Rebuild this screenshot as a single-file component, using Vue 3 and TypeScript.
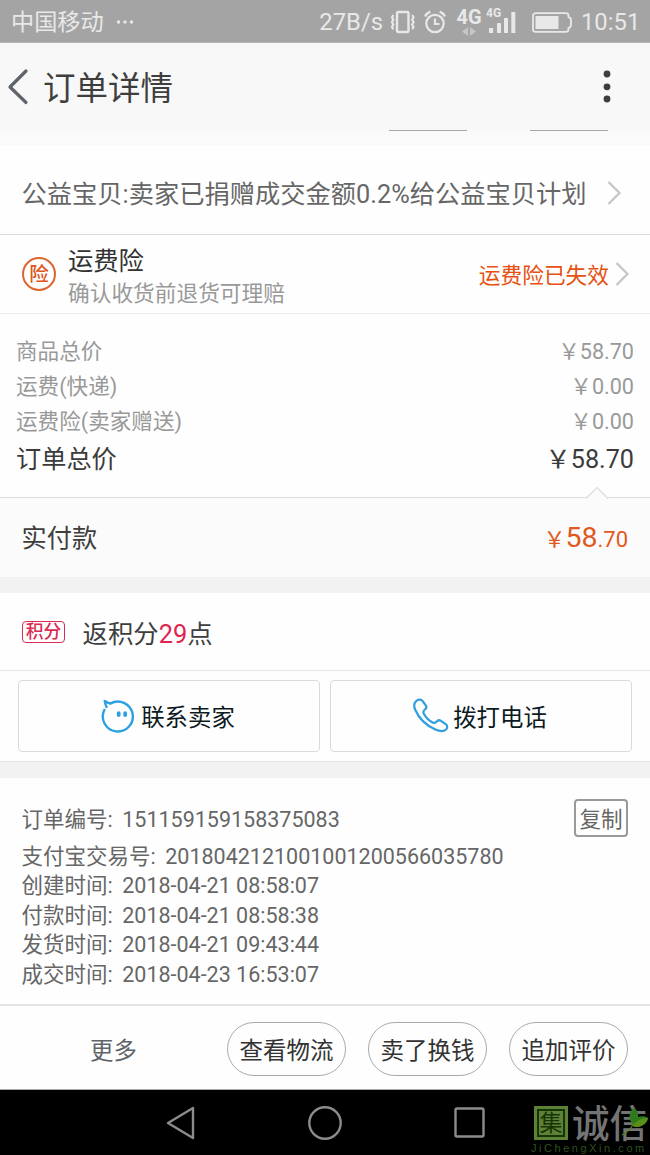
<script setup lang="ts">
interface Row { label: string; value: string }

const costs: Row[] = [
  { label: '商品总价', value: '￥58.70' },
  { label: '运费(快递)', value: '￥0.00' },
  { label: '运费险(卖家赠送)', value: '￥0.00' },
]
const times: Row[] = [
  { label: '创建时间:', value: '2018-04-21 08:58:07' },
  { label: '付款时间:', value: '2018-04-21 08:58:38' },
  { label: '发货时间:', value: '2018-04-21 09:43:44' },
  { label: '成交时间:', value: '2018-04-23 16:53:07' },
]
const actions: string[] = ['查看物流', '卖了换钱', '追加评价']
</script>

<template>
  <div class="screen">
    <div class="status">
      <span class="carrier">中国移动</span>
      <svg class="dots" width="18" height="6" viewBox="0 0 18 6"><circle cx="2.5" cy="3" r="1.7" /><circle cx="9" cy="3" r="1.7" /><circle cx="15.5" cy="3" r="1.7" /></svg>
      <span class="speed">27B/s</span>
      <svg class="vib" width="26" height="24" viewBox="0 0 26 24" fill="none" stroke="#e8e8e8">
        <rect x="7" y="2" width="11.5" height="20" rx="1.5" stroke-width="2.4" />
        <path d="M3.3 5l-1.300 2.300 1.300 2.400-1.300 2.400 1.300 2.400-1.300 2.400 1.300 2.300M22.200 5l1.300 2.300-1.300 2.400 1.300 2.400-1.300 2.400 1.300 2.400-1.300 2.300" stroke-width="2.200" />
      </svg>
      <svg class="alarm" width="22" height="24" viewBox="0 0 22 24" fill="none" stroke="#e8e8e8" stroke-width="2.2">
        <circle cx="11" cy="13.5" r="8.7" />
        <path d="M11 8.5v5.5h4.5M1 6.5Q2.6 3 6.3 1.6M21 6.5Q19.4 3 15.7 1.6" />
      </svg>
      <div class="net">
        <span class="net-big">4G</span>
        <svg width="16" height="9" viewBox="0 0 16 9" fill="#c6c6c6"><path d="M7 0v9L1 4.5zM9 0v9l6-4.5z" /></svg>
      </div>
      <div class="signal">
        <span class="net-small">4G</span>
        <svg width="30" height="24" viewBox="0 0 30 24" fill="#e8e8e8"><rect x="3" y="18" width="4.2" height="5" rx=".5" /><rect x="11" y="13" width="4" height="10" rx=".5" /><rect x="18" y="8" width="4" height="15" rx=".5" /><rect x="25.3" y="2" width="4" height="21" rx=".5" /></svg>
      </div>
      <svg class="battery" width="42" height="21" viewBox="0 0 42 21">
        <path d="M3.5 1.2H34a2.500 2.500 0 0 1 2.500 2.500v1.500q2.500.5 2.500 2.800v5q0 2.300-2.500 2.800v1.500a2.500 2.500 0 0 1-2.500 2.500H3.5a2.5 2.5 0 0 1-2.5-2.5V3.7a2.5 2.5 0 0 1 2.5-2.5z" fill="none" stroke="#e8e8e8" stroke-width="1.8" />
        <rect x="3.5" y="4" width="23" height="13" fill="#e8e8e8" />
      </svg>
      <span class="clock">10:51</span>
    </div>

    <header class="header">
      <svg class="back" width="24" height="40" viewBox="0 0 24 40" fill="none" stroke="#5f646b" stroke-width="3.2" stroke-linecap="round" stroke-linejoin="round"><path d="M20 4L4 20l16 15.5" /></svg>
      <h1>订单详情</h1>
      <svg class="more-menu" width="8" height="34" viewBox="0 0 8 34" fill="#3e3e3e"><circle cx="4" cy="4" r="3.4" /><circle cx="4" cy="16.8" r="3.4" /><circle cx="4" cy="29" r="3.4" /></svg>
    </header>
    <div class="under-header"><i></i><i></i></div>

    <div class="charity">
      <span>公益宝贝:卖家已捐赠成交金额0.2%给公益宝贝计划</span>
      <svg class="chev" width="15" height="26" viewBox="0 0 15 26" fill="none" stroke="#c6c6c6" stroke-width="2.3"><path d="M1.5 2l11 11-11 11" /></svg>
    </div>

    <div class="insurance">
      <span class="seal">险</span>
      <div class="ins-text">
        <div class="ins-title">运费险</div>
        <div class="ins-sub">确认收货前退货可理赔</div>
      </div>
      <span class="expired">运费险已失效</span>
      <svg class="chev" width="15" height="26" viewBox="0 0 15 26" fill="none" stroke="#c6c6c6" stroke-width="2.3"><path d="M1.5 2l11 11-11 11" /></svg>
    </div>

    <div class="costs">
      <div v-for="c in costs" :key="c.label" class="cost"><span>{{ c.label }}</span><span>{{ c.value }}</span></div>
      <div class="cost total"><span>订单总价</span><span>￥58.70</span></div>
    </div>

    <div class="paid">
      <svg class="notch" width="24" height="13" viewBox="0 0 24 13"><path d="M1 12.5L12 1.5l11 11" fill="#fbfbfb" stroke="#dcdcdc" stroke-width="1.2" /></svg>
      <span class="paid-label">实付款</span>
      <span class="price">￥<b>58</b>.70</span>
    </div>
    <div class="gap"></div>

    <div class="points">
      <span class="tag">积分</span>
      <span>返积分<em>29</em>点</span>
    </div>

    <div class="contact">
      <button>
        <svg class="wang" width="34" height="34" viewBox="0 0 34 34" fill="none" stroke="#2ca1e2" stroke-width="2.4" stroke-linecap="round" stroke-linejoin="round">
          <path d="M3.4 10.8A15 15 0 1 0 9.2 4.6Q6 3.4 3.7 1.9q.5 3.2 1.8 6.1" />
          <path d="M17.700 14.200v1.800M24.200 14.200v1.800" stroke-width="3.8" />
        </svg>
        <span>联系卖家</span>
      </button>
      <button>
        <svg class="phone" width="36" height="36" viewBox="0 0 36 36" fill="none" stroke="#2f9fdf" stroke-width="2.2" stroke-linejoin="round">
          <path d="M3 3.2C5 1.2 8.2 1 9.7 3.1l3.2 4.6c1 1.5.3 2.8-1 3.8-1.4 1.1-2 2.3-1.2 3.9 2.2 4.2 5.1 7 9 9 1.600.8 2.900.5 3.900-.8 1.200-1.500 2.800-1.700 4.300-.7l4.800 3.200c2.100 1.400 2 4.400-.1 5.800-2.500 1.800-6.100 1.400-10.200-.4C12.700 27.200 5.700 20 2.100 11.500.7 8.200 1 5.200 3 3.200z" />
        </svg>
        <span>拨打电话</span>
      </button>
    </div>
    <div class="gap second"></div>

    <div class="details">
      <div class="detail first"><span>订单编号:</span><span>151159159158375083</span><button class="copy">复制</button></div>
      <div class="detail alipay"><span>支付宝交易号:</span><span>2018042121001001200566035780</span></div>
      <div v-for="t in times" :key="t.label" class="detail"><span>{{ t.label }}</span><span>{{ t.value }}</span></div>
    </div>

    <div class="actions">
      <span class="more">更多</span>
      <button v-for="a in actions" :key="a">{{ a }}</button>
    </div>

    <nav class="nav">
      <svg width="30" height="34" viewBox="0 0 30 34"><path d="M28 2v30L3 17z" /></svg>
      <svg width="36" height="36" viewBox="0 0 36 36"><circle cx="18" cy="18" r="15.7" /></svg>
      <svg width="32" height="32" viewBox="0 0 32 32"><rect x="1.5" y="1.5" width="28" height="28" rx="1.500" /></svg>
      <div class="watermark">
        <div class="mark-top">
          <span class="mark-box"><span>集</span></span>
          <span class="mark-name">诚信</span>
          <svg class="leaf" width="28" height="32" viewBox="0 0 28 32"><path d="M11 17C7 13 8 5 13 2c3 2 5 5 4 9 3-1 8-1 10 1-1 6-9 11-15 8z" fill="#2f7a1c" /><path d="M12 20c4-6 9-8 15-8-1 6-9 11-15 8z" fill="#5a8f18" /><path d="M13 17Q8 26 1 29" fill="none" stroke="#56851c" stroke-width="1.300" /></svg>
        </div>
        <div class="mark-url">JiChengXin.com</div>
      </div>
    </nav>
  </div>
</template>

<style>
body { margin: 0; background: #fff; }
</style>

<style scoped>
.screen {
  width: 650px;
  height: 1155px;
  overflow: hidden;
  display: flex;
  flex-direction: column;
  background: #fefefe;
  color: #666;
  font-family: Roboto, "Noto Sans CJK SC", sans-serif;
  font-size: 21.6px;
  white-space: nowrap;
}
.screen > * { flex: none; box-sizing: border-box; }
button { box-sizing: border-box; padding: 0; background: #fefefe; font-family: inherit; }
svg { flex: none; display: block; }

.status { height: 43px; display: flex; align-items: center; background: #a4a4a4; color: #e8e8e8; border-bottom: 1px solid #b4b4b4; padding: 2px 0 0 11px; line-height: 40px; }
.carrier { font-size: 23.2px; }
.dots { margin-left: 12px; fill: #e8e8e8; }
.speed { margin-left: auto; font-size: 23.800px; }
.vib { margin-left: 7px; }
.alarm { margin-left: 8px; }
.net { margin-left: 10px; width: 26px; height: 31px; display: flex; flex-direction: column; align-items: center; }
.net-big { font-size: 20px; font-weight: 700; line-height: 20px; height: 19px; }
.net svg { margin-top: 1px; }
.signal { position: relative; width: 33px; height: 24px; margin-left: 3px; }
.signal svg { margin-left: 1px; }
.net-small { position: absolute; left: 1px; top: -4px; font-size: 12px; line-height: 14px; font-weight: 700; }
.battery { margin-left: 14px; }
.clock { width: 69px; margin-left: 7px; font-size: 23.800px; }

.header { height: 87px; display: flex; align-items: center; background: #f8f8f8; padding: 0 39px 0 6px; }
.header h1 { margin: 0 0 0 13px; font-size: 32.500px; font-weight: 400; color: #3e3e3e; line-height: 40px; padding-top: 5px; }
.more-menu { margin-left: auto; }
.under-header { height: 15px; background: #fafafa; display: flex; justify-content: flex-end; gap: 63px; padding-right: 42px; }
.under-header i { width: 78px; height: 1px; background: #a8a8a8; }

.charity { height: 90px; display: flex; align-items: center; padding-left: 21.500px; font-size: 25.280px; border-bottom: 1px solid #dcdcdc; line-height: 30px; padding-top: 6px; }
.charity span { padding-top: 4px; }
.charity .chev { margin-left: 20px; }
.insurance { height: 79px; display: flex; align-items: center; padding: 0 20px 0 22px; border-bottom: 1px solid #ececec; }
.seal { width: 34px; height: 34px; box-sizing: border-box; border: 2px solid #dd6530; border-radius: 50%; color: #dd5518; font-size: 19.500px; font-weight: 500; line-height: 31px; text-align: center; }
.ins-text { margin-left: 12px; padding-top: 6px; }
.ins-title { font-size: 25.300px; line-height: 32px; color: #333; padding-top: 1px; }
.ins-sub { font-size: 21.700px; line-height: 31px; color: #999; }
.expired { margin-left: auto; margin-right: 6px; color: #e65010; font-size: 21.700px; line-height: 30px; padding-top: 4px; }

.costs { height: 183px; padding: 21px 16px 0; color: #999; }
.cost { display: flex; justify-content: space-between; height: 35px; line-height: 34px; }
.total { height: 40px; line-height: 40px; font-size: 25.200px; color: #3b3b3b; }
.paid { position: relative; height: 80px; display: flex; align-items: center; justify-content: space-between; padding: 0 22px; background: #fbfbfb; border-top: 1px solid #dcdcdc; font-size: 25.200px; color: #3e3e3e; }
.paid-label { padding-bottom: 3px; margin-left: -.5px; }
.notch { position: absolute; right: 41px; top: -12px; }
.price { color: #e05a1d; font-size: 22px; }
.price b { font-size: 28.500px; font-weight: 400; }
.gap { height: 16px; background: #f2f2f2; }
.points { height: 78px; display: flex; align-items: center; padding-left: 22px; border-bottom: 1px solid #e6e6e6; color: #3e3e3e; font-size: 25.400px; padding-top: 1px; }
.points em { color: #df2450; font-style: normal; }
.tag { width: 43px; height: 22px; box-sizing: border-box; border: 1.500px solid #dc2b55; border-radius: 4px; color: #d92a54; font-size: 17.800px; font-weight: 500; line-height: 20px; text-align: center; margin-right: 17.500px; }
.contact { height: 91px; display: flex; gap: 10px; padding: 9px 18px; border-bottom: 1px solid #e4e4e4; }
.contact button { flex: 1; height: 72px; border: 1.500px solid #dadada; border-radius: 4px; display: flex; align-items: center; justify-content: center; color: #0c1a22; font-size: 23.400px; padding-right: 2px; }
.wang { margin-right: 6px; }
.phone { margin-right: 4px; }
.second { height: 16px; }

.details { height: 228px; padding: 22px 22px 0 21.500px; border-bottom: 2px solid #e4e4e4; }
.detail { display: flex; gap: 9.500px; height: 29.500px; line-height: 29px; font-size: 21.500px; }
.first { height: 42px; line-height: 40px; }
.alipay { height: 29px; line-height: 30px; }
.copy { width: 54px; height: 38px; margin: -1px 0 0 auto; border: 2px solid #999; border-radius: 4px; color: #666; font-size: 21.600px; line-height: 34px; padding-top: 2px; }

.actions { height: 84px; display: flex; align-items: center; padding: 3px 22px 0 90px; color: #3b3b3b; font-size: 23.400px; border-bottom: 1px solid #aaa; gap: 22px; }
.more { color: #5f646b; margin-right: auto; }
.actions button { width: 119px; height: 54px; border: 1px solid #aaa; border-radius: 27px; font-size: 23.500px; color: #333; }

.nav { position: relative; flex: 1; background: #000; display: flex; align-items: center; padding-left: 165px; }
.nav > svg { fill: none; stroke: #8c8c8c; stroke-width: 2.400; stroke-linejoin: round; }
.nav > svg + svg { margin-left: 112px; }
.nav > svg + svg + svg { margin-left: 111px; }
.watermark { position: absolute; left: 531px; top: 16px; width: 119px; }
.mark-top { display: flex; height: 37px; }
.mark-box { width: 34px; height: 34px; box-sizing: border-box; margin-left: 3px; padding: 3px; background: #5d8236; color: #173408; }
.mark-box span { display: block; width: 28px; height: 28px; box-sizing: border-box; border: 2px solid #173408; font-size: 23px; line-height: 25px; text-align: center; }
.mark-name { margin-left: 4px; font-size: 37.500px; line-height: 36px; font-weight: 500; color: #747474; }
.leaf { position: absolute; right: 1px; top: 0; }
.mark-url { font-family: "Liberation Sans", sans-serif; font-size: 11px; line-height: 11px; letter-spacing: 2.550px; color: #2d521c; }
</style>
